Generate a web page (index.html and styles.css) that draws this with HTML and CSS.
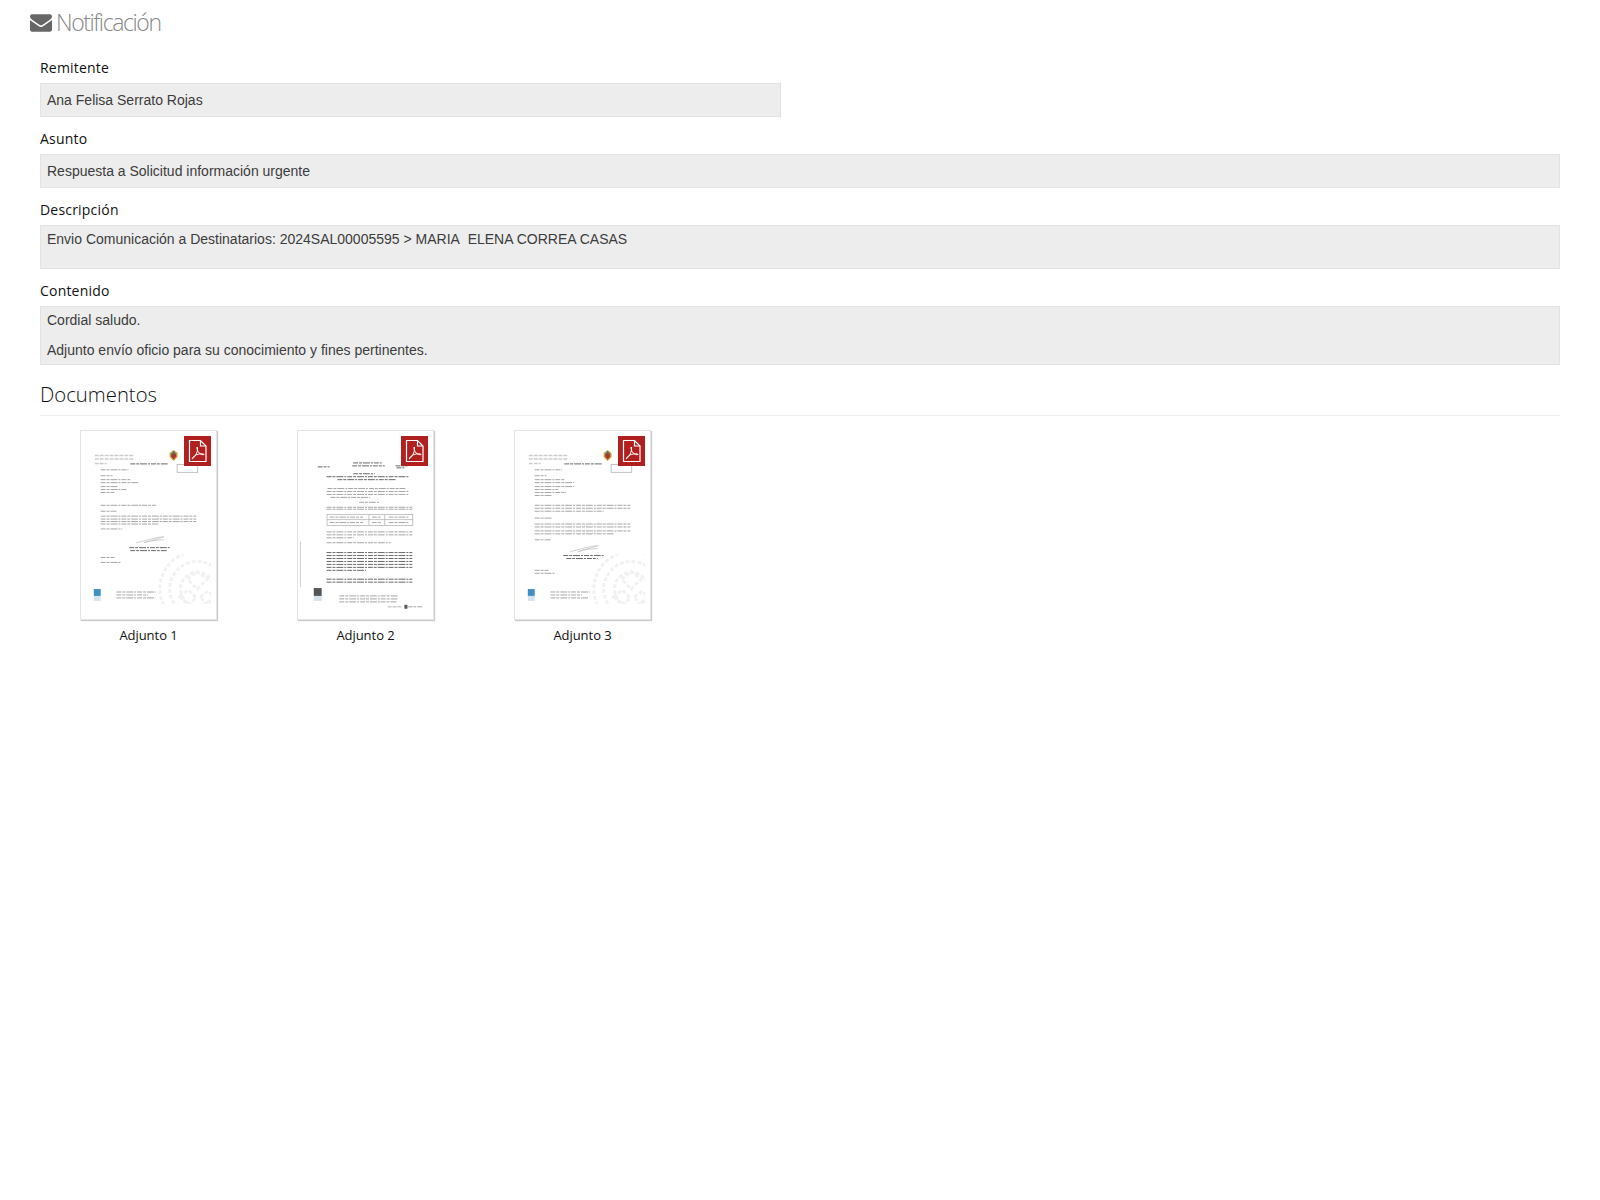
FILE: index.html
```html
<!DOCTYPE html>
<html lang="es">
<head>
  <meta charset="UTF-8">
  <title>Notificación</title>
  <link rel="stylesheet" href="styles.css">
</head>
<body>
  <svg class="defs" width="0" height="0">
    <symbol id="pdf" viewBox="0 0 27 30">
      <rect width="27" height="30" fill="#b11f1f"/>
      <path d="M5.500 4.500h11l5.500 5.500v15.500h-16.500z M16.500 4.500v5.500h5.500" fill="none" stroke="#fff" stroke-width="1.200"/>
      <path d="M8 23c2-1 4-4 5-7 .6-2 .8-4 .2-5-.6 1 0 4 2 6 1.500 1.500 3.500 2 5 1.500-1-1-4-1-7 0-2 .6-4 2-5.200 4.500z" fill="none" stroke="#fff" stroke-width="1"/>
    </symbol>
    <symbol id="crest" viewBox="0 0 10 11">
      <path d="M1 3l4-3 4 3v4l-4 4-4-4z" fill="#c9a23c"/>
      <path d="M2.500 3.500h5v3l-2.500 3-2.500-3z" fill="#a8392c"/>
      <path d="M4 1.500h2v3h-2z" fill="#3c6a8c"/>
    </symbol>
    <clipPath id="wm-clip"><rect x="78" y="125" width="54" height="50"/></clipPath>
  </svg>

  <h2 class="page-title">
    <svg class="title-icon" viewBox="0 256 1792 1408"><path fill="#666" d="M1792 710v794q0 66-47 113t-113 47h-1472q-66 0-113-47t-47-113v-794q44 49 101 87 362 246 497 345 57 42 92.500 65.500t94.500 48 110 24.500h2q51 0 110-24.500t94.500-48 92.500-65.500q170-123 498-345 57-39 100-87zm0-294q0 79-49 151t-122 123q-376 261-468 325-10 7-42.500 30.500t-54 38-52 32.500-57.500 27-50 9h-2q-23 0-50-9t-57.500-27-52-32.500-54-38-42.500-30.500q-91-64-262-182.500t-205-142.500q-62-42-117-115.500t-55-136.500q0-78 41.500-130t118.500-52h1472q65 0 112.500 47t47.500 113z"/></svg>
    Notificación
  </h2>

  <div class="content">
    <div class="field field-half">
      <label>Remitente</label>
      <div class="value value-single">Ana Felisa Serrato Rojas</div>
    </div>
    <div class="field">
      <label>Asunto</label>
      <div class="value value-single">Respuesta a Solicitud información urgente</div>
    </div>
    <div class="field">
      <label>Descripción</label>
      <div class="value value-area">Envio Comunicación a Destinatarios: 2024SAL00005595 &gt; MARIA&nbsp; ELENA CORREA CASAS</div>
    </div>
    <div class="field">
      <label>Contenido</label>
      <div class="value value-rich">
        <p>Cordial saludo.</p>
        <p>Adjunto envío oficio para su conocimiento y fines pertinentes.</p>
      </div>
    </div>

    <h3 class="section-title">Documentos</h3>

    <div class="docs">
      <div class="doc">
        <div class="thumb">
          <svg class="page-art" viewBox="0 0 137 190">
            <g class="wm" clip-path="url(#wm-clip)">
              <circle cx="118" cy="160" r="38"/><circle cx="118" cy="160" r="28"/><circle cx="118" cy="160" r="17"/>
              <path d="M108 150l10-8 10 8-10 10zM100 168l9-7 8 8-8 7zM121 168l8-6 7 7-8 7z"/>
            </g>
            <g class="faint">
              <path d="M14 24.500h39M14 28h39M14 32.500h12"/>
            </g>
            <use href="#crest" x="89" y="19" width="10" height="11"/>
            <rect class="stamp" x="97.500" y="33.500" width="21" height="8"/>
            <g class="txt">
              <path class="dark" d="M50 33h38"/>
              <path d="M20 39h28M20 45h12M20 49h30M20 52h38M20 56h18M20 59h27M20 62h14"/>
              <path d="M20 75h56M20 81h16M20 86h97M20 89h97M20 91.500h97M20 94h58M20 99h22"/>
              <path class="dark" d="M49 118h41M50 121h37"/>
              <path d="M20 128h14M20 133h20"/>
              <path d="M36 163h40M36 166h32M36 169h38"/>
            </g>
            <path class="sig" d="M56 113c10-2 20-6 28-6-6 2-14 4-20 6 6-2 14-3 20-3"/>
            <rect class="blue" x="13" y="160" width="7" height="7"/>
            <rect class="pale" x="13" y="167" width="7" height="5"/>
          </svg>
          <svg class="pdf-badge"><use href="#pdf"/></svg>
        </div>
        <span class="doc-name">Adjunto 1</span>
      </div>

      <div class="doc">
        <div class="thumb">
          <svg class="page-art" viewBox="0 0 137 190">
            <g class="txt">
              <path class="dark" d="M56 32h29M55 35h33M20 36h12M99 35h12M100 37h8"/>
              <path class="dark" d="M56 43h22M29 46h84M40 49h60"/>
              <path d="M30 58h79M29 61h84M29 64h84M33 67h40M62 72h20"/>
              <path d="M29 77h87M29 79h87"/>
              <path d="M29 102h87M29 105h87M29 108h28M29 113h65"/>
              <path class="dark" d="M29 123h87M29 126h87M29 129h87M29 132h87M29 135h87M29 138h87M29 141h40"/>
              <path class="dark" d="M29 150h87M29 153h87"/>
              <path d="M42 167h60M42 170h60M42 173h58"/>
            </g>
            <rect class="stamp" x="29.500" y="84.500" width="87" height="11"/>
            <path class="stamp" d="M29.500 89.500h87M72 84.500v11M88 84.500v11"/>
            <g class="txt"><path d="M32 87h34M75 87h10M92 87h20M32 92.500h34M75 92.500h10M92 92.500h20"/></g>
            <path class="sig" d="M2.500 112v46"/>
            <rect class="ink" x="16" y="159" width="8" height="8"/>
            <rect class="pale" x="16" y="167" width="8" height="5"/>
            <g class="faint"><path d="M91 178h14"/></g>
            <rect class="ink" x="108" y="176" width="3" height="4"/>
            <g class="txt"><path d="M111 178h15"/></g>
          </svg>
          <svg class="pdf-badge"><use href="#pdf"/></svg>
        </div>
        <span class="doc-name">Adjunto 2</span>
      </div>

      <div class="doc">
        <div class="thumb">
          <svg class="page-art" viewBox="0 0 137 190">
            <g class="wm" clip-path="url(#wm-clip)">
              <circle cx="118" cy="160" r="38"/><circle cx="118" cy="160" r="28"/><circle cx="118" cy="160" r="17"/>
              <path d="M108 150l10-8 10 8-10 10zM100 168l9-7 8 8-8 7zM121 168l8-6 7 7-8 7z"/>
            </g>
            <g class="faint">
              <path d="M14 24.500h39M14 28h39M14 32.500h12"/>
            </g>
            <use href="#crest" x="89" y="19" width="10" height="11"/>
            <rect class="stamp" x="97.500" y="33.500" width="21" height="8"/>
            <g class="txt">
              <path class="dark" d="M50 33h38"/>
              <path d="M20 39h28M20 45h12M20 49h30M20 52h40M20 56h40M20 59h24M20 62h32M20 65h18"/>
              <path d="M20 75h97M20 78h97M20 81h70M20 88h18M20 94h97M20 97h97M20 101h97M20 104h80M20 110h16"/>
              <path class="dark" d="M49 126h41M52 129h32"/>
              <path d="M20 141h14M20 144h20"/>
              <path d="M36 163h40M36 166h32M36 169h38"/>
            </g>
            <path class="sig" d="M56 122c10-2 20-6 28-6-6 2-14 4-20 6 6-2 14-3 20-3"/>
            <rect class="blue" x="13" y="160" width="7" height="7"/>
            <rect class="pale" x="13" y="167" width="7" height="5"/>
          </svg>
          <svg class="pdf-badge"><use href="#pdf"/></svg>
        </div>
        <span class="doc-name">Adjunto 3</span>
      </div>
    </div>
  </div>
</body>
</html>
```

FILE: styles.css
```css
body {
  margin: 0;
  font-family: "Open Sans", "Liberation Sans", sans-serif;
  font-size: 14px;
  color: #111;
  background: #fff;
}
.defs {
  display: block;
  height: 0;
}
.page-title {
  display: flex;
  align-items: center;
  gap: 4px;
  margin: 0;
  padding: 4px 30px 0;
  height: 39px;
  box-sizing: border-box;
  font-size: 23px;
  font-weight: 300;
  letter-spacing: -1.4px;
  color: #888;
}
.title-icon {
  width: 22px;
  height: 18px;
  margin-top: 3px;
}
.content {
  padding: 0 40px;
}
.field {
  margin-top: 12px;
}
.field:first-child {
  margin-top: 19px;
}
.field-half {
  width: 741px;
}
label {
  display: block;
  height: 20px;
  line-height: 20px;
  margin-bottom: 5px;
  letter-spacing: .2px;
}
.value {
  box-sizing: border-box;
  padding: 0 6px;
  background: #ededed;
  border: 1px solid #e3e3e3;
  font-family: "Liberation Sans", Arial, sans-serif;
  color: #3c3c3c;
}
.value-single {
  height: 34px;
  line-height: 33px;
}
.value-area {
  height: 44px;
  line-height: 26px;
}
.value-rich {
  height: 59px;
}
.value-rich p {
  margin: 0;
  line-height: 20px;
  padding-top: 3px;
  padding-bottom: 7px;
}
.section-title {
  margin: 16px 0 14px;
  padding-bottom: 7px;
  border-bottom: 1px solid #eee;
  font-size: 20.3px;
  font-weight: 300;
  line-height: 27px;
  color: #111;
}
.docs {
  display: flex;
}
.doc {
  width: 217px;
  display: flex;
  flex-direction: column;
  align-items: center;
}
.thumb {
  position: relative;
  width: 137px;
  height: 190px;
  box-sizing: border-box;
  border: 1px solid #e4e4e4;
  box-shadow: 1px 1px 1px #ccc;
  background: #fff;
}
.page-art {
  display: block;
  width: 135px;
  height: 188px;
  filter: blur(.35px);
}
.pdf-badge {
  position: absolute;
  top: 5px;
  right: 5px;
  width: 27px;
  height: 30px;
}
.doc-name {
  margin-top: 5px;
  line-height: 20px;
  font-size: 13px;
  letter-spacing: -.05px;
  color: #111;
}

/* miniaturas */
.txt path {
  fill: none;
  stroke: #999;
  stroke-width: .9;
  stroke-dasharray: 5 1 3 1 7 1 2 1;
}
.txt path.dark {
  stroke: #555;
}
.faint path {
  fill: none;
  stroke: #ccc;
  stroke-width: 1.500;
  stroke-dasharray: 4 1;
}
.wm circle,
.wm path {
  fill: none;
  stroke: #f1f1f1;
  stroke-width: 3;
  stroke-dasharray: 4 2;
}
.stamp {
  fill: none;
  stroke: #aaa;
  stroke-width: .7;
}
.sig {
  fill: none;
  stroke: #bbb;
  stroke-width: .7;
}
.blue {
  fill: #3d8fc4;
}
.pale {
  fill: #d4e3ee;
}
.ink {
  fill: #555;
}
```
